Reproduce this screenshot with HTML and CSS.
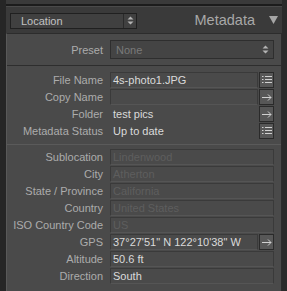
FILE: index.html
```html
<html>
<head>
    <title>Metadata</title>
    <meta charset="UTF-8">
    <link rel="stylesheet" href="styles.css">
</head>
<body>
  <div class="frame">
    <div class="side-left"></div>
    <div class="main">
      <div class="top-rule"></div>
      <div class="header">
        <div class="select">
          <span>Location</span>
          <span class="updown"><svg width="7" height="9" viewBox="0 0 7 9"><path d="M3.5 0.5 L6.5 3.5 H0.5 Z M3.5 8.5 L6.5 5.5 H0.5 Z" fill="#b4b4b4"/></svg></span>
        </div>
        <div class="title">Metadata</div>
        <svg class="collapse" width="9" height="8" viewBox="0 0 9 8"><path d="M0 0 H9 L4.5 8 Z" fill="#a6a6a6"/></svg>
      </div>

      <div class="panel">
        <div class="preset-row">
          <div class="label">Preset</div>
          <div class="preset-select">
            <span>None</span>
            <span class="updown"><svg width="7" height="9" viewBox="0 0 7 9"><path d="M3.5 0.5 L6.5 3.5 H0.5 Z M3.5 8.5 L6.5 5.5 H0.5 Z" fill="#b4b4b4"/></svg></span>
          </div>
        </div>

        <div class="group first">
          <div class="row">
            <div class="label">File Name</div>
            <div class="field">4s-photo1.JPG</div>
            <div class="btn"><svg width="10" height="8" viewBox="0 0 10 8"><path d="M0 0.5 H1.5 M3 0.5 H10 M0 3.5 H1.5 M3 3.5 H10 M0 6.5 H1.5 M3 6.5 H10" stroke="#d0d0d0" stroke-width="1"/></svg></div>
          </div>
          <div class="row">
            <div class="label">Copy Name</div>
            <div class="field"></div>
            <div class="btn"><svg width="10" height="7" viewBox="0 0 10 7"><path d="M0 3.5 H9 M6 0.5 L9 3.5 L6 6.5" stroke="#d0d0d0" stroke-width="1" fill="none"/></svg></div>
          </div>
          <div class="row">
            <div class="label">Folder</div>
            <div class="field plain">test pics</div>
            <div class="btn"><svg width="10" height="7" viewBox="0 0 10 7"><path d="M0 3.5 H9 M6 0.5 L9 3.5 L6 6.5" stroke="#d0d0d0" stroke-width="1" fill="none"/></svg></div>
          </div>
          <div class="row">
            <div class="label">Metadata Status</div>
            <div class="field plain">Up to date</div>
            <div class="btn"><svg width="10" height="8" viewBox="0 0 10 8"><path d="M0 0.5 H1.5 M3 0.5 H10 M0 3.5 H1.5 M3 3.5 H10 M0 6.5 H1.5 M3 6.5 H10" stroke="#d0d0d0" stroke-width="1"/></svg></div>
          </div>
        </div>

        <div class="group second">
          <div class="row">
            <div class="label">Sublocation</div>
            <div class="field wide dim">Lindenwood</div>
          </div>
          <div class="row">
            <div class="label">City</div>
            <div class="field wide dim">Atherton</div>
          </div>
          <div class="row">
            <div class="label">State / Province</div>
            <div class="field wide dim">California</div>
          </div>
          <div class="row">
            <div class="label">Country</div>
            <div class="field wide dim">United States</div>
          </div>
          <div class="row">
            <div class="label">ISO Country Code</div>
            <div class="field wide dim">US</div>
          </div>
          <div class="row">
            <div class="label">GPS</div>
            <div class="field">37°27'51" N 122°10'38" W</div>
            <div class="btn"><svg width="10" height="7" viewBox="0 0 10 7"><path d="M0 3.5 H9 M6 0.5 L9 3.5 L6 6.5" stroke="#d0d0d0" stroke-width="1" fill="none"/></svg></div>
          </div>
          <div class="row">
            <div class="label">Altitude</div>
            <div class="field wide">50.6 ft</div>
          </div>
          <div class="row">
            <div class="label">Direction</div>
            <div class="field wide">South</div>
          </div>
        </div>
      </div>
    </div>
    <div class="side-right"></div>
  </div>
</body>
</html>
```

FILE: styles.css
```css
body {
    margin: 0;
    background-color: #3a3a3a;
    font-family: "Liberation Sans", Arial, sans-serif;
    font-size: 11px;
    overflow: hidden;
}

.frame {
    display: flex;
    height: 291px;
}

.side-left {
    width: 6px;
    background-color: #262626;
}

.side-right {
    width: 5px;
    background-color: #2a2a2a;
}

.main {
    flex: 1;
    display: flex;
    flex-direction: column;
}

.top-rule {
    margin-top: 4px;
    height: 2px;
    background-color: #1c1c1c;
    border-bottom: 1px solid #4a4a4a;
}

.header {
    height: 26px;
    display: flex;
    align-items: center;
    padding: 0 4px 0 4px;
}

.select {
    width: 127px;
    height: 16px;
    border: 1px solid #202020;
    background-color: #404040;
    color: #c2c2c2;
    display: flex;
    align-items: center;
    justify-content: space-between;
    padding-left: 10px;
    box-sizing: border-box;
    margin-top: 1px;
}

.updown {
    width: 12px;
    height: 100%;
    border-left: 1px solid #2a2a2a;
    display: flex;
    align-items: center;
    justify-content: center;
}

.title {
    margin-left: auto;
    margin-right: 14px;
    font-size: 14.5px;
    color: #a8a8a8;
}

.panel {
    flex: 1;
    background-color: #4a4a4a;
    border-top: 1px solid #2c2c2c;
    border-left: 1px solid #595959;
    border-right: 1px solid #2c2c2c;
}

.preset-row {
    height: 31px;
    display: flex;
    align-items: center;
    border-bottom: 1px solid #2e2e2e;
}

.label {
    width: 96px;
    text-align: right;
    color: #acacac;
    margin-right: 7px;
    white-space: nowrap;
}

.preset-select {
    width: 164px;
    height: 19px;
    border: 1px solid #2e2e2e;
    background-color: #444444;
    color: #7a7a7a;
    display: flex;
    align-items: center;
    justify-content: space-between;
    padding-left: 5px;
    box-sizing: border-box;
}

.preset-select .updown {
    border-left: none;
    margin-right: 2px;
}

.group {
    display: flex;
    flex-direction: column;
    gap: 1px;
}

.group.first {
    padding: 6px 0 5px;
    border-bottom: 1px solid #5a5a5a;
}

.group.second {
    padding: 4px 0 0;
}

.row {
    height: 16px;
    display: flex;
    align-items: center;
}

.field {
    width: 148px;
    height: 16px;
    box-sizing: border-box;
    border: 1px solid #3a3a3a;
    border-bottom-color: #555555;
    color: #dadada;
    padding-left: 2px;
    line-height: 14px;
    white-space: nowrap;
    overflow: hidden;
}

.field.plain {
    border-color: transparent;
}

.field.wide {
    width: 164px;
}

.field.dim {
    color: #5e5e5e;
}

.btn {
    width: 15px;
    height: 16px;
    margin-left: 1px;
    box-sizing: border-box;
    border: 1px solid #2a2a2a;
    background-color: #575757;
    display: flex;
    align-items: center;
    justify-content: center;
}
```
